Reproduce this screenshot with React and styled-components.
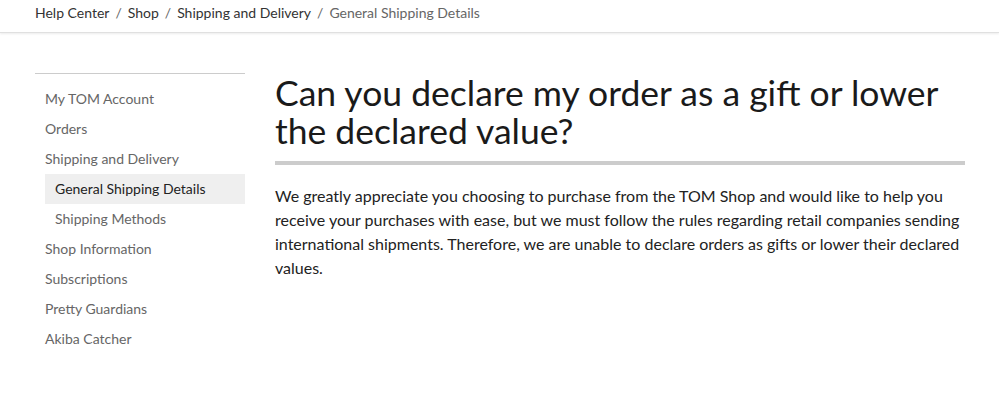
import { styled, createGlobalStyle } from "styled-components";

const GlobalStyle = createGlobalStyle`
  html, body {
    margin: 0;
    padding: 0;
    background: #fff;
    font-family: Lato, "Open Sans", sans-serif;
  }
`;

const crumbs = ["Help Center", "Shop", "Shipping and Delivery"];

const navItems = [
  { label: "My TOM Account" },
  { label: "Orders" },
  { label: "Shipping and Delivery" },
  { label: "General Shipping Details", sub: true, active: true },
  { label: "Shipping Methods", sub: true },
  { label: "Shop Information" },
  { label: "Subscriptions" },
  { label: "Pretty Guardians" },
  { label: "Akiba Catcher" },
];

const App = () => {
  return (
    <>
      <GlobalStyle />
      <Header>
        <Crumbs>
          {crumbs.map((c) => (
            <CrumbItem key={c}>
              <CrumbLink>{c}</CrumbLink>
              <Slash>/</Slash>
            </CrumbItem>
          ))}
          <CrumbCurrent>General Shipping Details</CrumbCurrent>
        </Crumbs>
      </Header>
      <Body>
        <Sidebar>
          {navItems.map((item) => (
            <NavItem key={item.label} $sub={item.sub} $active={item.active}>
              {item.label}
            </NavItem>
          ))}
        </Sidebar>
        <Main>
          <Title>Can you declare my order as a gift or lower the declared value?</Title>
          <Text>
            We greatly appreciate you choosing to purchase from the TOM Shop and would like to help you
            receive your purchases with ease, but we must follow the rules regarding retail companies
            sending international shipments. Therefore, we are unable to declare orders as gifts or lower
            their declared values.
          </Text>
        </Main>
      </Body>
    </>
  );
};
export default App;

const Header = styled.header`
  height: 32px;
  border-bottom: 1px solid #e0e0e0;
  box-shadow: 0 1px 2px rgba(0, 0, 0, 0.08);
  display: flex;
  align-items: center;
  padding-left: 35px;
`;

const Crumbs = styled.nav`
  display: flex;
  align-items: center;
  font-size: 14px;
  line-height: 20px;
  margin-top: -6px;
`;

const CrumbItem = styled.span`
  display: flex;
`;

const CrumbLink = styled.span`
  color: #333;
`;

const Slash = styled.span`
  color: #666;
  margin: 0 6px;
`;

const CrumbCurrent = styled.span`
  color: #666;
`;

const Body = styled.div`
  display: flex;
  padding: 40px 0 0 35px;
  gap: 30px;
`;

const Sidebar = styled.aside`
  width: 210px;
  flex: none;
  border-top: 1px solid #ccc;
  padding-top: 10px;
  display: flex;
  flex-direction: column;
`;

const NavItem = styled.div`
  height: 30px;
  line-height: 30px;
  font-size: 14px;
  color: ${({ $active }) => ($active ? "#222" : "#666")};
  margin-left: 10px;
  padding-left: ${({ $sub }) => ($sub ? "10px" : "0")};
  background: ${({ $active }) => ($active ? "#efefef" : "transparent")};
`;

const Main = styled.main`
  width: 690px;
`;

const Title = styled.h1`
  margin: 0;
  font-size: 35.5px;
  line-height: 38px;
  font-weight: 400;
  color: #1a1a1a;
  padding-top: 1px;
  padding-bottom: 11px;
  border-bottom: 4px solid #ccc;
`;

const Text = styled.p`
  margin: 19px 0 0;
  font-size: 16px;
  line-height: 24px;
  color: #222;
`;
